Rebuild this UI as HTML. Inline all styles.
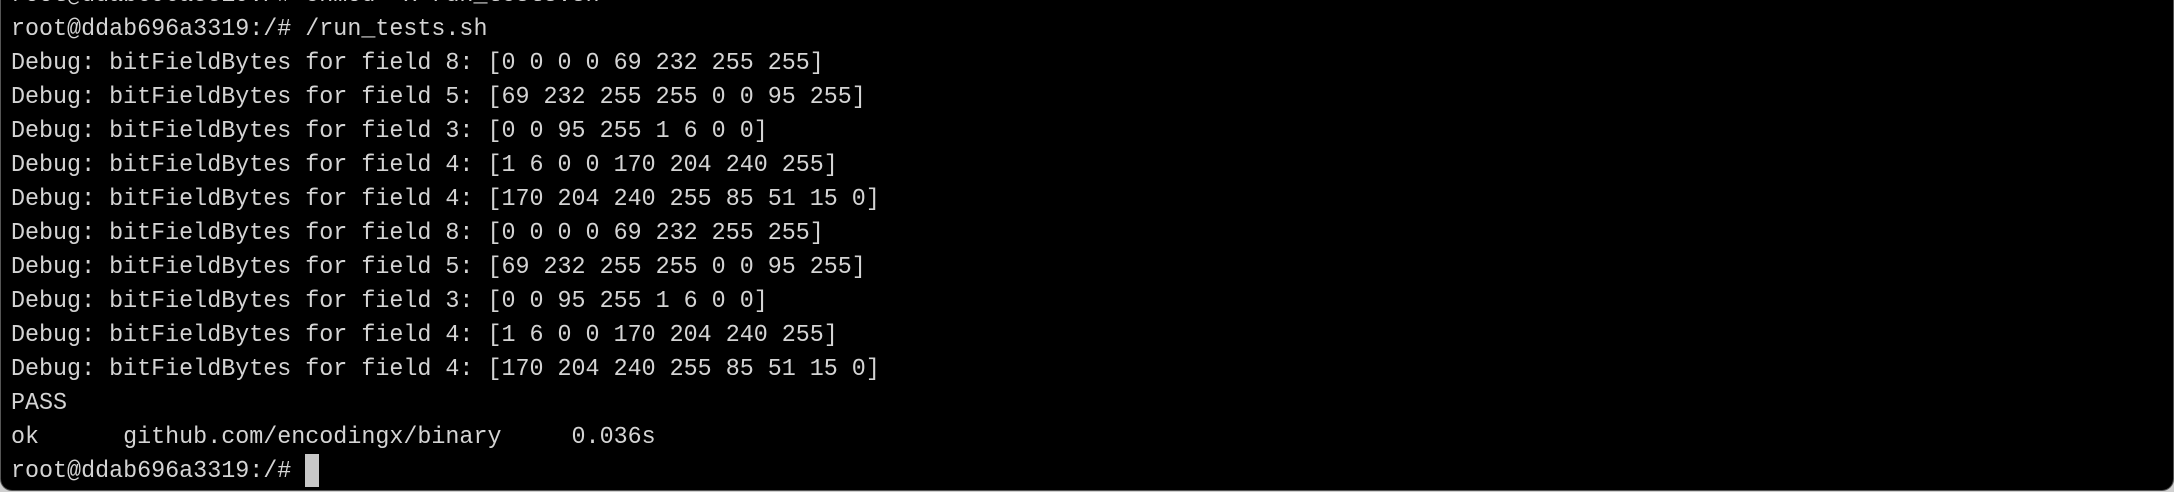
<!DOCTYPE html>
<html><head><meta charset="utf-8"><style>
html,body{margin:0;padding:0;background:#cfcfcf;}
.win{position:absolute;left:0;top:0;width:2172px;height:490px;background:#000;border:1px solid #555;border-top:none;border-radius:0 0 12px 12px;overflow:hidden;}
pre{position:absolute;left:10px;top:-21px;margin:0;font-family:"Liberation Mono",monospace;font-size:24px;letter-spacing:0;line-height:34px;color:#d4d4d4;transform-origin:0 0;transform:scaleX(0.973);}
.cur{position:absolute;left:304px;top:454px;width:14px;height:33px;background:#c8c8c8;}
</style></head><body><div class="win"><pre>root@ddab696a3319:/# chmod +x run_tests.sh
root@ddab696a3319:/# /run_tests.sh
Debug: bitFieldBytes for field 8: [0 0 0 0 69 232 255 255]
Debug: bitFieldBytes for field 5: [69 232 255 255 0 0 95 255]
Debug: bitFieldBytes for field 3: [0 0 95 255 1 6 0 0]
Debug: bitFieldBytes for field 4: [1 6 0 0 170 204 240 255]
Debug: bitFieldBytes for field 4: [170 204 240 255 85 51 15 0]
Debug: bitFieldBytes for field 8: [0 0 0 0 69 232 255 255]
Debug: bitFieldBytes for field 5: [69 232 255 255 0 0 95 255]
Debug: bitFieldBytes for field 3: [0 0 95 255 1 6 0 0]
Debug: bitFieldBytes for field 4: [1 6 0 0 170 204 240 255]
Debug: bitFieldBytes for field 4: [170 204 240 255 85 51 15 0]
PASS
ok      github.com/encodingx/binary     0.036s
root@ddab696a3319:/# </pre><div class="cur"></div></div>
</body></html>
